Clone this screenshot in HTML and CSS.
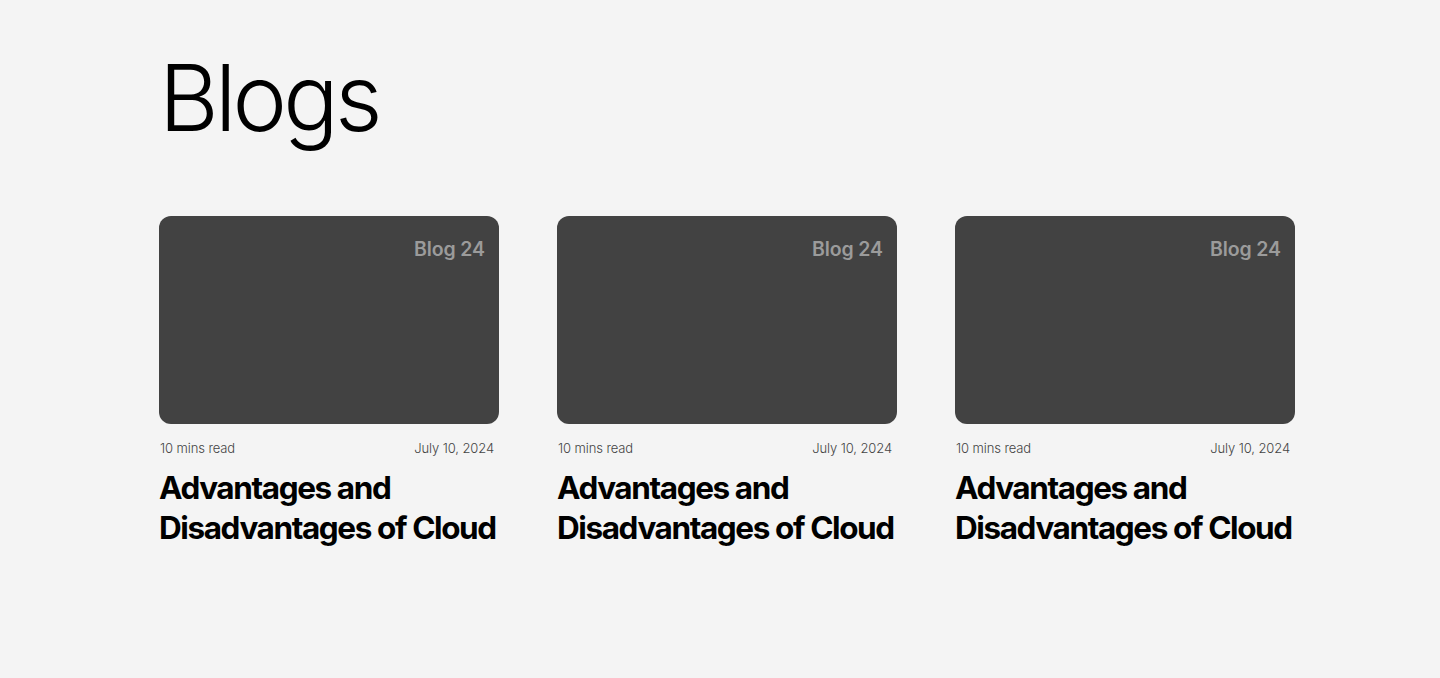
FILE: index.html
```html
<!DOCTYPE html>
<html lang="en">
<head>
<meta charset="utf-8">
<title>Blogs</title>
<link rel="stylesheet" href="styles.css">
</head>
<body>
<main class="page">
  <h1 class="title">Blogs</h1>
  <section class="grid">
    <article class="card">
      <div class="thumb"><span class="tag">Blog 24</span></div>
      <div class="meta"><span>10 mins read</span><span>July 10, 2024</span></div>
      <h2 class="card-title">Advantages and Disadvantages of Cloud</h2>
    </article>
    <article class="card">
      <div class="thumb"><span class="tag">Blog 24</span></div>
      <div class="meta"><span>10 mins read</span><span>July 10, 2024</span></div>
      <h2 class="card-title">Advantages and Disadvantages of Cloud</h2>
    </article>
    <article class="card">
      <div class="thumb"><span class="tag">Blog 24</span></div>
      <div class="meta"><span>10 mins read</span><span>July 10, 2024</span></div>
      <h2 class="card-title">Advantages and Disadvantages of Cloud</h2>
    </article>
  </section>
</main>
</body>
</html>
```

FILE: styles.css
```css
* { box-sizing: border-box; }
html, body { margin: 0; padding: 0; }
body {
  background: #f4f4f4;
  font-family: Inter, "Noto Sans", sans-serif;
  color: #000;
  height: 678px;
  overflow: hidden;
}
.page {
  padding: 40px 0 0 159px;
}
.title {
  margin: 0;
  font-size: 92px;
  font-weight: 300;
  line-height: 116px;
  letter-spacing: -3.8px;
}
.grid {
  margin-top: 60px;
  display: grid;
  grid-template-columns: repeat(3, 340px);
  column-gap: 58px;
}
.thumb {
  height: 208px;
  background: #424242;
  border-radius: 12px;
  display: flex;
  justify-content: flex-end;
  padding: 20px 14px 0 0;
}
.tag {
  font-size: 19.5px;
  font-weight: 600;
  color: #9b9b9b;
  line-height: 27px;
  letter-spacing: -0.1px;
}
.meta {
  display: flex;
  justify-content: space-between;
  padding: 0 5px 0 1px;
  margin-top: 16px;
  font-size: 13px;
  font-weight: 300;
  color: #444;
  line-height: 16px;
  letter-spacing: -0.1px;
}
.card-title {
  margin: 12px 0 0 0;
  font-size: 31.5px;
  font-weight: 700;
  line-height: 40px;
  letter-spacing: -1.4px;
}
```
